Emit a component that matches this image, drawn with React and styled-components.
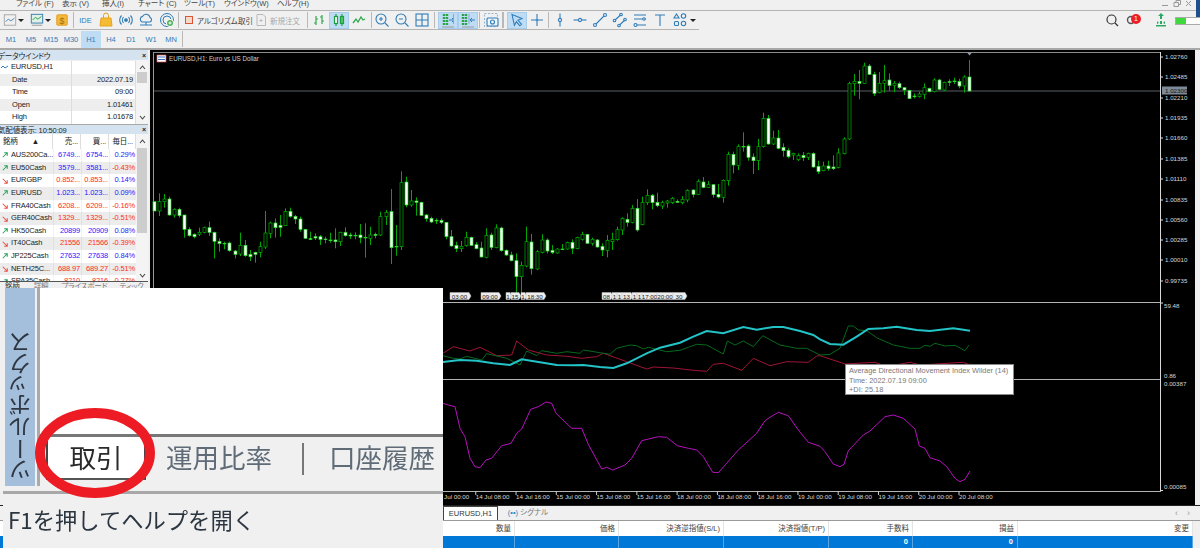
import React from 'react'
import styled, { createGlobalStyle } from 'styled-components'

const GlobalStyle = createGlobalStyle`
  html, body { margin: 0; padding: 0; background: #f0f0f0; }
  * { box-sizing: border-box; }
`

const UI_FONT = `"Liberation Sans", "Noto Sans CJK JP", sans-serif`
const BLUE = '#2f7db8'

const Frame = styled('div')`
  position: relative;
  width: 1200px;
  height: 548px;
  overflow: hidden;
  background: #f0f0f0;
  font-family: ${UI_FONT};
  font-feature-settings: "palt";
  color: #333;
`

/* top bars */
const MenuBar = styled('div')`
  display: flex;
  align-items: center;
  height: 11px;
  padding-bottom: 2px;
  border-bottom: 1px solid #b4b4b4;
  font-size: 7.5px;
  line-height: 8px;
  color: #444;
`
const MenuItem = styled('span')`
  flex: none;
  width: ${(p) => p.$w}px;
  white-space: nowrap;
`
const WindowControls = styled('div')`
  display: flex;
  margin-left: auto;
  margin-right: 8px;
  align-items: center;
`
const CornerBlue = styled('div')`
  position: absolute;
  right: 0;
  top: 0;
  width: 4px;
  height: 17px;
  background: #1f4e8c;
`
const Toolbar = styled('div')`
  display: flex;
  align-items: center;
  height: 19px;
  border-bottom: 1px solid #b4b4b4;
  width: 699px;
  padding-left: 2px;
`
const ToolBtn = styled('div')`
  flex: none;
  display: flex;
  align-items: center;
  justify-content: ${(p) => (p.$text ? 'flex-start' : 'center')};
  gap: ${(p) => p.$gap || 0}px;
  width: ${(p) => p.$w || 20}px;
  height: 17px;
  padding-left: ${(p) => p.$pl || 0}px;
  font-size: 7.5px;
  color: ${(p) => p.$color || '#444'};
  white-space: nowrap;
  background: ${(p) => (p.$active ? '#bfdcf5' : 'transparent')};
  border: 1px solid ${(p) => (p.$active ? '#a8cdec' : 'transparent')};
`
const Sep = styled('div')`
  flex: none;
  width: ${(p) => p.$w || 1}px;
  height: 16px;
  margin: 0 ${(p) => p.$r ?? 1}px 0 ${(p) => p.$l ?? 1}px;
  background: #b8b8b8;
`
const Caret = styled('span')`
  flex: none;
  width: 6px;
  height: 0;
  margin: 0 ${(p) => p.$r ?? 0}px 0 0;
  border-left: 3px solid transparent;
  border-right: 3px solid transparent;
  border-top: 3px solid #222;
`
const RightTools = styled('div')`
  position: absolute;
  top: 12px;
  left: 1104px;
  display: flex;
  align-items: center;
  gap: 6px;
`
const Badge = styled('span')`
  position: absolute;
  top: 2px;
  left: 5px;
  width: 10px;
  height: 10px;
  border-radius: 50%;
  background: #ee1c25;
  color: #fff;
  font-size: 7px;
  line-height: 10px;
  text-align: center;
`
const AlertWrap = styled('div')`
  position: relative;
  width: 18px;
  height: 16px;
  display: flex;
  align-items: center;
`
const Battery = styled('div')`
  width: 26px;
  height: 8px;
  margin: 2px 0 0 1px;
  border: 1px solid #aaa;
  background: #fff;
  &::before {
    content: '';
    display: block;
    width: 10px;
    height: 100%;
    background: #3fd83f;
  }
`
const TimeframeBar = styled('div')`
  display: flex;
  align-items: center;
  height: 20px;
  padding-left: 1px;
  border-bottom: 2px solid #a8a8a8;
`
const TfBtn = styled('div')`
  width: 20px;
  height: 17px;
  line-height: 17px;
  text-align: center;
  font-size: 7.5px;
  color: ${BLUE};
  background: ${(p) => (p.$active ? '#bfdcf5' : 'transparent')};
`

/* workspace */
const Workspace = styled('div')`
  display: flex;
  height: 455px;
`
const Sidebar = styled('div')`
  flex: none;
  width: 150px;
  display: flex;
  flex-direction: column;
  padding-right: 2px;
  font-size: 7.5px;
  letter-spacing: -0.15px;
  color: #222;
`
const PanelTitle = styled('div')`
  display: flex;
  justify-content: space-between;
  align-items: center;
  height: ${(p) => p.$h}px;
  padding-right: 2px;
  background: #d5e3f1;
  font-size: 7.5px;
  white-space: nowrap;
  overflow: hidden;
  border-top: ${(p) => (p.$line ? '1px solid #a8a8a8' : 'none')};
  & > span:first-child { margin-left: -2px; }
`
const CloseMark = styled('span')`
  font-size: 7px;
  font-weight: bold;
  color: #222;
`
const PanelBody = styled('div')`
  display: flex;
  height: ${(p) => p.$h}px;
  overflow: hidden;
`
const DataTable = styled('div')`
  flex: none;
  width: 136px;
  padding-top: 1px;
`
const DataRow = styled('div')`
  display: grid;
  grid-template-columns: 72px 64px;
  height: 12.6px;
  line-height: 12.6px;
  background: ${(p) => (p.$shade ? '#eeeeee' : '#fff')};
  & > span { border-right: 1px solid #ddd; white-space: nowrap; overflow: hidden; }
  & > span:first-child { padding-left: 12px; display: flex; align-items: center; gap: 2px; }
  & > span:first-child svg { margin-left: -11px; }
  & > span:last-child { text-align: right; padding-right: 2px; }
`
const Scroll = styled('div')`
  flex: 1;
  position: relative;
  background: #f4f4f4;
`
const ScrollThumb = styled('div')`
  position: absolute;
  left: 1px;
  right: 1px;
  top: ${(p) => p.$top}px;
  height: ${(p) => p.$h}px;
  background: #cdcdcd;
`
const ScrollChev = styled('svg')`
  position: absolute;
  left: 3px;
  top: ${(p) => p.$top}px;
`
const WatchGrid = styled('div')`
  flex: none;
  width: 136px;
  display: grid;
  grid-template-columns: 53px 28px 28px 27px;
  grid-template-rows: 15px;
  grid-auto-rows: 12.65px;
  line-height: 12.65px;
`
const WatchHead = styled('div')`
  grid-column: 1 / -1;
  display: grid;
  grid-template-columns: subgrid;
  line-height: 15px;
  background: #fff;
  & > span { padding: 0 2px; border-right: 1px solid #ddd; text-align: right; white-space: nowrap; }
  & > span:first-child { text-align: left; padding-left: 3px; word-spacing: 12px; }
`
const WatchRow = styled('div')`
  grid-column: 1 / -1;
  display: grid;
  grid-template-columns: subgrid;
  background: ${(p) => (p.$shade ? '#ececec' : '#fff')};
`
const SymbolCell = styled('span')`
  display: flex;
  align-items: center;
  gap: 3px;
  padding-left: 2px;
  white-space: nowrap;
  overflow: hidden;
  color: #222;
`
const ValueCell = styled('span')`
  text-align: right;
  padding-right: 1px;
  overflow: hidden;
  white-space: nowrap;
  color: ${(p) => (p.$down ? '#ff2a2a' : '#2323ff')};
  border-left: 1px solid ${(p) => (p.$shade ? '#e0e0e0' : '#f2f2f2')};
`
const WatchTabs = styled('div')`
  display: flex;
  height: 15px;
  border-top: 1px solid #555;
  font-size: 7.5px;
  line-height: 9px;
  color: #777;
  padding-left: 5px;
  background: #f0f0f0;
`
const WatchTab = styled('span')`
  margin-right: ${(p) => p.$gap}px;
  color: ${(p) => (p.$on ? '#333' : '#777')};
`

/* chart */
const ChartArea = styled('div')`
  flex: none;
  position: relative;
  width: 1045px;
  background: #000;
  display: flex;
  flex-direction: column;
`
const PaneSvg = styled('svg')`
  display: block;
  flex: none;
  font-family: "Liberation Sans", sans-serif;
  font-size: 6.2px;
`
const ChartTooltip = styled('div')`
  position: absolute;
  left: 695px;
  top: 314px;
  width: 169px;
  height: 31px;
  padding: 1px 3px;
  background: #fff;
  border: 1px solid #8a8a8a;
  color: #777;
  font-size: 7.4px;
  line-height: 9.5px;
  white-space: nowrap;
`

/* bottom panel */
const BottomPanel = styled('div')`
  height: 43px;
  border-top: 1px solid #222;
  font-size: 7.5px;
`
const TabStrip = styled('div')`
  display: flex;
  align-items: flex-end;
  height: 15px;
  padding-left: 443px;
  padding-right: 10px;
  background: #f0f0f0;
  border-bottom: 1px solid #999;
`
const ChartTab = styled('div')`
  width: ${(p) => p.$w}px;
  height: 14px;
  line-height: 13px;
  text-align: center;
  color: ${(p) => (p.$on ? '#333' : '#777')};
  background: ${(p) => (p.$on ? '#fff' : 'transparent')};
  border: ${(p) => (p.$on ? '1px solid #444' : 'none')};
  border-bottom: none;
`
const SignalGlyph = styled('span')`
  color: ${BLUE};
`
const TabArrows = styled('div')`
  display: flex;
  gap: 9px;
  margin-left: auto;
  align-self: center;
  color: #999;
  font-size: 9px;
`
const TradeTable = styled('div')`
  width: 1193px;
  display: grid;
  grid-template-columns: 515px 104px 105px 105px 84px 105px 175px;
`
const HeadCell = styled('div')`
  height: 15px;
  line-height: 15px;
  padding-right: 3px;
  text-align: right;
  background: #fff;
  color: #444;
  white-space: nowrap;
  border-right: 1px solid #e4e4e4;
`
const BlueCell = styled('div')`
  height: 13px;
  line-height: 12px;
  padding-right: 4px;
  text-align: right;
  background: #0078d7;
  color: #fff;
  font-weight: bold;
  border-right: 1px solid #5aa6e4;
`

/* pasted crop */
const ToolboxCrop = styled('div')`
  position: absolute;
  left: 3px;
  top: 288px;
  width: 440px;
  height: 260px;
  background: #fff;
  display: flex;
  flex-direction: column;
  font-family: "Noto Sans CJK JP", "Liberation Sans", sans-serif;
  font-feature-settings: normal;
  overflow: hidden;
`
const CropMain = styled('div')`
  display: flex;
  height: 206px;
  border-bottom: 3px solid #a8a8a8;
  background: #f0f0f0;
`
const VerticalBar = styled('div')`
  flex: none;
  width: 30px;
  margin-left: 2px;
  height: 198px;
  background: #a3bfdc;
  display: flex;
  align-items: flex-end;
  justify-content: center;
  padding-bottom: 6px;
  color: #2f3742;
  font-size: 23px;
  line-height: 30px;
  white-space: nowrap;
  & > span {
    writing-mode: vertical-rl;
    transform: rotate(180deg);
    font-feature-settings: "vpal";
    filter: blur(0.4px);
  }
`
const CropDivider = styled('div')`
  flex: none;
  width: 3px;
  height: 198px;
  margin-left: 2px;
  background: #aaa;
`
const CropContent = styled('div')`
  flex: 1;
  display: flex;
  flex-direction: column;
`
const CropBlank = styled('div')`
  flex: none;
  height: 149px;
  border-bottom: 3px solid #777;
  background: #fff;
`
const CropTabs = styled('div')`
  flex: 1;
  display: flex;
  align-items: flex-start;
  background: #f0f0f0;
  font-size: 26.5px;
  line-height: 40px;
  color: #5f6b77;
`
const CropTab = styled('div')`
  flex: none;
  width: ${(p) => p.$w}px;
  margin-left: ${(p) => p.$ml || 0}px;
  height: ${(p) => (p.$on ? 43 : 40)}px;
  text-align: center;
  color: ${(p) => (p.$on ? '#2a2a2a' : '#5f6b77')};
  background: ${(p) => (p.$on ? '#fff' : 'transparent')};
  border-left: ${(p) => (p.$on ? '2px solid #444' : 'none')};
  border-right: ${(p) => (p.$on ? '2px solid #444' : 'none')};
  border-bottom: ${(p) => (p.$on ? '2px solid #555' : 'none')};
  & > span { filter: blur(0.4px); display: inline-block; }
`
const CropTabSep = styled('div')`
  flex: none;
  width: 2px;
  height: 32px;
  margin: 6px 24px 0 18px;
  background: #777;
`
const StatusText = styled('div')`
  flex: 1;
  background: #f0f0f0;
  padding-left: 5px;
  font-size: 22.3px;
  line-height: 50px;
  color: #2c3640;
  & > span { filter: blur(0.4px); display: inline-block; }
`
const RedRing = styled('svg')`
  position: absolute;
  left: 31px;
  top: 119px;
`

/* small helpers */
const I = ({ children, w = 16, h = 16, vb = '0 0 16 16' }) => (
  <svg width={w} height={h} viewBox={vb} fill="none" stroke={BLUE} strokeWidth="1.1">
    {children}
  </svg>
)

const Icon = ({ name }) => {
  switch (name) {
    case 'line':
      return <I><rect x="1.5" y="2" width="13" height="12" stroke="#aaa" /><path d="M3 10l3-3 3 2 4-3" stroke="#4a87b8" /></I>
    case 'chartbox':
      return <I><rect x="1.5" y="1.5" width="13" height="10" fill="#dff0e6" stroke="#3a7fb0" /><path d="M3 8l3-3 3 2 4-3" stroke="#2ca24c" /><path d="M2 14h12" stroke="#999" /></I>
    case 'dollar':
      return <svg width="16" height="16" viewBox="0 0 16 16"><rect x="2" y="2" width="12" height="12" rx="1" fill="#f4b73a" stroke="#e19c1b" /><text x="8" y="12" textAnchor="middle" fontSize="10" fill="#a86a00" fontFamily="Liberation Sans">$</text></svg>
    case 'bag':
      return <svg width="16" height="16" viewBox="0 0 16 16"><path d="M3 6h10l1 8H2z" fill="#f5bb34" stroke="#e6a21f" /><path d="M5.5 6V3.5a2.5 2.5 0 0 1 5 0V6" stroke="#e6a21f" fill="none" /></svg>
    case 'signal':
      return <I><circle cx="8" cy="8" r="1.3" fill={BLUE} /><path d="M5.5 5.2a4 4 0 0 0 0 5.6M10.5 5.2a4 4 0 0 1 0 5.6M3.5 3.5a6.5 6.5 0 0 0 0 9M12.5 3.5a6.5 6.5 0 0 1 0 9" /></I>
    case 'cloud':
      return <I><path d="M4 10a3 3 0 0 1 .5-5.6A4 4 0 0 1 12 5.5a2.4 2.4 0 0 1 0 4.5z" /><path d="M2 13h12M8 10v3" /></I>
    case 'radar':
      return <svg width="16" height="16" viewBox="0 0 16 16" fill="none" stroke={BLUE}><circle cx="8" cy="8" r="6.5" /><circle cx="8" cy="8" r="4" /><circle cx="11" cy="11" r="3.6" fill="#4cae5b" stroke="#fff" /><path d="M9.4 11h3.2M11 9.4v3.2" stroke="#fff" /></svg>
    case 'algo':
      return <svg width="12" height="12" viewBox="0 0 12 12"><rect x="2.5" y="2.5" width="7" height="7" fill="#f6d9c8" stroke="#d9553a" /></svg>
    case 'order':
      return <svg width="12" height="14" viewBox="0 0 12 14" fill="none" stroke="#b9b9b9"><path d="M2 1.5h6l2.500 2.500v8.500H2zM4.500 7.500h3M6 6v3" /></svg>
    case 'bars':
      return <svg width="16" height="16" viewBox="0 0 16 16" fill="none" stroke="#2eaa4f" strokeWidth="1.2"><path d="M5 4v9M3 11h2M5 7h2M11 3v9M9 5h2M11 9h2" /></svg>
    case 'candles':
      return <svg width="16" height="16" viewBox="0 0 16 16" fill="none" stroke="#18a041" strokeWidth="1.2"><path d="M5 2v12M11 2v12" /><rect x="3.5" y="4.5" width="3" height="7" fill="#fff" /><rect x="9.5" y="4.5" width="3" height="7" fill="#53c76c" /></svg>
    case 'lineGreen':
      return <svg width="16" height="16" viewBox="0 0 16 16" fill="none" stroke="#2eaa4f" strokeWidth="1.3"><path d="M2 11l3-4 2 3 3-5 2 3 2-1" /></svg>
    case 'zoomIn':
      return <I><circle cx="7" cy="7" r="5" /><path d="M11 11l3.5 3.5M5 7h4M7 5v4" /></I>
    case 'zoomOut':
      return <I><circle cx="7" cy="7" r="5" /><path d="M11 11l3.5 3.5M5 7h4" /></I>
    case 'grid':
      return <I><rect x="2" y="2" width="12" height="12" /><path d="M8 2v12M2 8h12" /></I>
    case 'shiftR':
      return <svg width="16" height="16" viewBox="0 0 16 16" fill="none"><path d="M4 2v12M7 2v12" stroke="#29a346" strokeWidth="2.4" strokeDasharray="2 1" /><path d="M9 8h5M12 6l2 2-2 2" stroke={BLUE} /><path d="M13.5 2v10" stroke="#7fa9c9" /><path d="M2 15h12" stroke="#9a9a9a" /></svg>
    case 'shiftL':
      return <svg width="16" height="16" viewBox="0 0 16 16" fill="none"><path d="M3 2v12M6 2v12" stroke="#29a346" strokeWidth="2.4" strokeDasharray="2 1" /><path d="M9 2v10" stroke="#7fa9c9" /><path d="M15 8h-5M12 6l-2 2 2 2" stroke={BLUE} /><path d="M2 15h12" stroke="#9a9a9a" /></svg>
    case 'camera':
      return <I><rect x="1.5" y="1.5" width="13" height="13" stroke="#9ab8d0" strokeDasharray="2 1.5" /><rect x="4" y="6" width="11" height="8" rx="1" fill="#eef5fb" /><circle cx="9.5" cy="10" r="2" /></I>
    case 'pointer':
      return <I><path d="M3 2.5l10 4-4 1.800 3.500 4-1.600 1.500-3.500-4-2 3.500z" /></I>
    case 'cross':
      return <I><path d="M8 2v4.500M8 9.500V14M2 8h4.500M9.500 8H14" /><circle cx="8" cy="8" r="1" /></I>
    case 'vline':
      return <I><path d="M8 1.500v13" /><circle cx="8" cy="8" r="1.600" fill="#eef" /></I>
    case 'hline':
      return <I><path d="M1.500 8h13" /><circle cx="8" cy="8" r="1.600" fill="#eef" /></I>
    case 'trend':
      return <I><path d="M3 13L13 3" /><circle cx="3" cy="13" r="1.500" fill="#eef" /><circle cx="13" cy="3" r="1.500" fill="#eef" /></I>
    case 'channel':
      return <I><path d="M2.500 8.500L9 2.500M7 13.500l6.500-6" /><circle cx="2.500" cy="8.500" r="1.300" fill="#eef" /><circle cx="9" cy="2.500" r="1.300" fill="#eef" /><circle cx="7" cy="13.500" r="1.300" fill="#eef" /><circle cx="13" cy="7.500" r="1.300" fill="#eef" /></I>
    case 'fib':
      return <I><path d="M2 3h12M2 7h12M5 13h9" /><circle cx="12" cy="7" r="1.200" fill="#eef" /><circle cx="3.500" cy="13" r="1.500" fill="#eef" /></I>
    case 'text':
      return <I><path d="M3 3h10M8 3v11" /></I>
    case 'shapes':
      return <I><path d="M4.500 2l2.500 4H2z" /><circle cx="11.500" cy="4" r="2.200" /><rect x="2.500" y="9.500" width="4" height="4" rx="1" /><circle cx="11.500" cy="11.500" r="2.200" /></I>
    default:
      return null
  }
}

const TrendArrow = ({ up }) => (
  <svg width="6" height="6" viewBox="0 0 8 8" fill="none" stroke={up ? '#23a455' : '#e8504a'} strokeWidth="1.400" style={{ flex: 'none' }}>
    {up ? <path d="M1 7l6-6M3 1h4v4" /> : <path d="M1 1l6 6M3 7h4V3" />}
  </svg>
)

const Chevron = ({ top, up }) => (
  <ScrollChev $top={top} width="7" height="5" viewBox="0 0 7 5" fill="none" stroke="#444" strokeWidth="1.100">
    <path d={up ? 'M1 4l2.500-3L6 4' : 'M1 1l2.500 3L6 1'} />
  </ScrollChev>
)

const menuItems = [
  ['ファイル (F)', 46], ['表示 (V)', 40], ['挿入(I)', 36], ['チャート (C)', 46],
  ['ツール(T)', 40], ['ウインドウ(W)', 53], ['ヘルプ(H)', 40],
]

const timeframes = ['M1', 'M5', 'M15', 'M30', 'H1', 'H4', 'D1', 'W1', 'MN']

const dataRows = [
  ['Date', '2022.07.19', true],
  ['Time', '09:00', false],
  ['Open', '1.01461', true],
  ['High', '1.01678', false],
]

const watchRows = [
  ['AUS200Ca...', '6749...', '6754...', '0.29%', true, false],
  ['EU50Cash', '3579...', '3581...', '-0.43%', true, false],
  ['EURGBP', '0.852...', '0.853...', '0.14%', false, true],
  ['EURUSD', '1.023...', '1.023...', '0.09%', true, false],
  ['FRA40Cash', '6208...', '6209...', '-0.16%', false, true],
  ['GER40Cash', '1329...', '1329...', '-0.51%', false, true],
  ['HK50Cash', '20899', '20909', '0.08%', true, false],
  ['IT40Cash', '21556', '21566', '-0.39%', false, true],
  ['JP225Cash', '27632', '27638', '0.84%', true, false],
  ['NETH25C...', '688.97', '689.27', '-0.51%', false, true],
  ['SPA35Cash', '8210', '8216', '-0.27%', true, true],
]

/* candles: [high, body top, body bottom, low, bear], y read at 3x from y=50 */
const candles = [
  [455,455,483,483,1],[430,455,483,498,0],[432,447,455,473,0],[440,447,495,497,1],[475,478,495,503,0],[473,478,497,503,1],[495,495,538,563,1],[532,538,557,560,1],
  [550,553,560,565,1],[533,547,553,558,0],[530,533,547,550,0],[515,533,547,558,1],[545,547,574,625,1],[565,574,581,605,1],[575,580,581,598,1],[575,579,602,605,1],
  [600,603,613,625,1],[548,586,612,618,0],[570,586,617,620,1],[600,613,620,633,1],[605,607,613,638,1],[575,590,607,622,0],[483,549,591,597,0],[515,519,550,565,0],
  [505,519,533,563,1],[495,526,532,560,1],[475,484,527,528,0],[473,484,499,503,1],[495,499,507,522,1],[500,507,538,545,1],[537,538,565,567,1],[545,566,568,570,1],
  [550,560,564,570,1],[555,560,568,585,1],[560,567,568,580,1],[548,570,572,578,1],[535,570,575,595,1],[545,547,575,588,0],[532,547,557,560,1],[548,555,558,567,1],
  [547,556,557,568,1],[522,555,563,580,1],[520,562,563,623,1],[530,555,565,585,0],[548,553,556,565,1],[485,500,555,558,0],[480,487,500,525,0],[417,485,593,642,1],
  [525,589,590,617,1],[364,398,590,600,0],[380,396,465,472,1],[420,453,465,470,0],[442,453,457,497,1],[455,457,496,498,1],[492,495,506,515,1],[500,505,516,519,1],
  [505,511,513,522,1],[505,511,517,522,1],[516,517,560,568,1],[540,560,588,590,1],[575,586,596,606,1],[573,589,596,606,0],[545,562,587,590,0],[560,562,586,588,1],
  [576,584,596,598,1],[575,594,621,622,1],[535,556,622,625,0],[548,555,592,600,1],[523,534,593,595,0],[530,534,602,605,1],[598,601,615,618,1],[605,615,632,634,1],
  [610,632,680,740,1],[635,646,680,740,0],[530,575,648,652,0],[552,576,656,674,1],[600,605,657,660,0],[553,570,607,610,0],[565,570,603,610,1],
  [585,601,607,612,1],[595,597,609,611,0],[582,597,599,600,1],[575,577,597,599,0],[568,577,595,612,1],[560,562,596,598,0],[545,553,568,572,0],[552,553,580,581,1],
  [563,568,580,587,0],[567,570,591,593,1],[580,589,600,618,1],[555,571,601,622,0],[548,568,575,600,0],[530,539,569,572,0],[502,505,540,555,0],[490,508,517,530,1],
  [465,475,517,520,0],[447,475,540,545,1],[440,458,524,526,0],[418,436,458,465,0],[432,436,458,478,1],[428,457,467,472,1],[452,458,468,477,0],[450,453,459,473,0],
  [441,445,458,462,0],[448,454,457,459,1],[438,448,458,463,0],[418,421,450,457,0],[418,420,433,442,1],[388,394,433,435,0],[381,396,412,415,1],[393,404,412,414,0],
  [403,404,434,443,1],[402,433,441,445,1],[388,391,442,458,0],[305,313,392,407,0],[305,313,345,370,1],[283,290,346,360,0],[247,289,291,305,1],[283,288,322,332,1],
  [310,321,332,372,1],[267,290,332,360,0],[188,205,290,293,0],[195,205,282,284,1],[242,264,282,285,0],[240,264,295,298,1],[280,292,302,320,1],[295,301,320,325,1],
  [308,310,315,330,0],[310,316,329,333,0],[306,316,323,333,1],[308,310,322,330,0],[307,311,351,353,1],[332,349,365,372,1],[335,348,362,364,0],[332,348,356,362,1],
  [316,351,356,360,1],[295,309,352,355,0],[262,267,311,313,0],[95,100,267,270,0],[72,94,101,137,0],[60,94,100,148,1],[38,48,100,102,0],[42,48,73,75,1],
  [65,73,130,138,1],[66,100,128,130,0],[45,92,100,128,0],[70,90,106,122,1],[93,100,106,127,0],[95,101,113,117,1],[112,113,120,135,1],[119,121,146,147,1],
  [130,138,140,145,1],[125,132,140,143,0],[100,113,133,148,0],[113,115,125,127,1],[85,90,125,127,0],[87,90,118,120,1],[95,97,120,123,0],
  [88,95,97,108,1],[83,93,95,102,1],[86,94,108,115,1],[76,81,108,128,0],[30,81,123,124,1],
]

const separators = [
  [450, 469, '03:00'], [481, 499, '09:00'], [506, 510, '1'], [511, 519, '15'], [521, 525, '1'], [526, 544, '18:30'],
  [602, 611, '08'], [612, 617, '1'], [617, 622, '1'], [622, 631, '13'], [632, 637, '1'], [637, 642, '1'], [642, 657, '17:00'], [657, 673, '20:00'], [673, 685, '30'],
]

const priceLabels = [
  [57, '1.02760'], [77, '1.02485'], [98, '1.02210'], [118, '1.01935'], [138, '1.01660'], [159, '1.01385'],
  [179, '1.01110'], [200, '1.00835'], [220, '1.00560'], [240, '1.00285'], [260, '1.00010'], [281, '0.99735'],
]

const dates = ['14 Jul 00:00', '14 Jul 08:00', '14 Jul 16:00', '15 Jul 00:00', '15 Jul 08:00', '15 Jul 16:00', '18 Jul 00:00', '18 Jul 08:00', '18 Jul 16:00', '19 Jul 00:00', '19 Jul 08:00', '19 Jul 16:00', '20 Jul 00:00', '20 Jul 08:00']

// indicator lines, read off two 3x crops
const toPts = (a, b = []) =>
  [
    ...a.map(([x, y]) => [440 + x / 3, 285 + y / 3]),
    ...b.map(([x, y]) => [820 + x / 3, 285 + y / 3]),
  ]
    .map((p) => p.map((v) => v.toFixed(1)).join(','))
    .join(' ')

const cyanLine = toPts(
  [[9,231],[60,225],[110,227],[160,235],[210,240],[245,223],[300,232],[350,240],[400,241],[430,240],[480,246],[520,249],[560,235],[620,205],[660,188],[720,173],[760,155],[800,138],[850,145],[910,126],[950,134],[1000,126],[1030,126],[1080,138],[1120,150]],
  [[0,163],[30,177],[70,179],[110,155],[145,132],[190,130],[230,125],[290,135],[330,138],[400,130],[450,137]]
)
const redLine = toPts(
  [[9,205],[40,185],[90,198],[120,187],[170,212],[215,210],[230,168],[265,195],[320,210],[380,214],[425,220],[470,215],[490,205],[560,230],[620,252],[640,246],[700,249],[760,256],[800,259],[820,238],[850,235],[905,256],[940,220],[990,242],[1040,230],[1105,232],[1130,213]],
  [[0,212],[30,222],[75,237],[165,232],[200,245],[270,232],[300,240],[430,232],[450,240]]
)
const greenLine = toPts(
  [[9,212],[40,220],[60,222],[80,214],[125,225],[140,206],[200,220],[240,240],[260,198],[290,212],[305,197],[350,205],[380,200],[420,205],[430,195],[510,208],[530,190],[570,180],[590,182],[610,192],[625,187],[680,200],[720,196],[745,187],[770,178],[800,180],[850,207],[862,168],[885,180],[910,168],[940,185],[968,152],[1020,180],[1070,190],[1100,190]],
  [[0,210],[30,208],[60,190],[85,123],[100,123],[115,135],[140,137],[170,158],[220,180],[270,190],[300,190],[315,181],[330,184],[345,175],[375,183],[405,181],[435,197],[447,180]]
)
const purpleLine = toPts(
  [[9,355],[25,360],[45,365],[60,430],[75,455],[90,520],[105,545],[120,548],[138,525],[155,520],[185,482],[213,475],[230,445],[245,432],[272,373],[295,365],[318,351],[335,355],[348,385],[395,430],[425,430],[445,478],[485,552],[500,547],[518,555],[555,540],[575,520],[605,467],[625,462],[655,455],[680,457],[712,482],[745,490],[770,495],[790,515],[818,562],[835,563],[860,535],[895,495],[950,445],[975,407],[990,397],[1015,382],[1045,392],[1075,435],[1105,472]],
  [[0,484],[15,500],[40,537],[60,545],[72,538],[85,497],[130,450],[150,438],[195,395],[220,390],[250,400],[285,432],[298,483],[315,490],[330,518],[360,528],[380,545],[405,580],[420,590],[435,583],[450,558]]
)

const Candle = ({ c, i }) => {
  const [hi, top, bot, lo, bear] = c
  const x = Math.round(154 + i * 5.033) + 0.5
  const y = (v) => 50 + v / 3
  return (
    <>
      <line x1={x} x2={x} y1={y(hi)} y2={y(lo)} stroke="#00a800" />
      <rect
        x={x - 1.5}
        width="3"
        y={y(top)}
        height={Math.max(0.6, (bot - top) / 3)}
        fill={bear ? '#fff' : '#000'}
        stroke={bear ? '#22d822' : '#00b000'}
        strokeWidth="0.7"
      />
    </>
  )
}

const AxisTick = ({ y, label }) => (
  <>
    <line x1="1160" x2="1163" y1={y} y2={y} stroke="#ddd" />
    <text x="1165" y={y + 2.2} fill="#d8d8d8">{label}</text>
  </>
)

const Pane = ({ top, h, children }) => (
  <PaneSvg width="1045" height={h} viewBox={`150 ${top} 1045 ${h}`}>
    {children}
  </PaneSvg>
)

const MainChart = () => (
  <Pane top={50} h={252}>
    <line x1="153" x2="1161" y1="52.500" y2="52.500" stroke="#8a8a8a" />
    <line x1="153.500" x2="153.500" y1="52" y2="302" stroke="#9a9a9a" />
    <line x1="1160.500" x2="1160.500" y1="52" y2="302" stroke="#d8d8d8" />
    <line x1="154" x2="1160" y1="91" y2="91" stroke="#5a6066" />
    <rect x="157" y="55" width="9" height="7" fill="#fff" stroke="#c8534e" strokeWidth="0.700" />
    <path d="M158 57h7M158 59.500h7" stroke="#3e6fc4" strokeWidth="1" />
    <text x="169" y="61" fill="#d0d0d0" fontSize="6.300">EURUSD,H1:  Euro vs US Dollar</text>
    {candles.map((c, i) => (
      <Candle key={i} c={c} i={i} />
    ))}
    <path d="M967 52.500h5l-2.500 3z" fill="#8f9aa6" />
    {priceLabels.map(([y, label]) => (
      <AxisTick key={label} y={y} label={label} />
    ))}
    <rect x="1162" y="86.500" width="25" height="8" fill="#7d8a97" />
    <text x="1165" y="92.800" fill="#111">1.02300</text>
    {separators.map(([x0, x1, label]) => (
      <g key={x0}>
        <path d={`M${x0} 292.500H${x1}l2 3.500-2 3.500H${x0}z`} fill="#ededed" stroke="#bbb" strokeWidth="0.500" />
        <text x={(x0 + x1) / 2} y="298.500" fill="#222" textAnchor="middle">{label}</text>
      </g>
    ))}
  </Pane>
)

const AdxChart = () => (
  <Pane top={302} h={77}>
    <line x1="153" x2="1161" y1="302.500" y2="302.500" stroke="#b4b4b4" />
    <line x1="1160.500" x2="1160.500" y1="302" y2="379" stroke="#d8d8d8" />
    <line x1="1160" x2="1163" y1="303" y2="303" stroke="#ddd" />
    <text x="1164" y="308" fill="#d8d8d8">59.48</text>
    <text x="1164" y="377.500" fill="#d8d8d8">0.86</text>
    <polyline points={redLine} fill="none" stroke="#a01436" />
    <polyline points={greenLine} fill="none" stroke="#056a1c" />
    <polyline points={cyanLine} fill="none" stroke="#22c4c8" strokeWidth="2" />
  </Pane>
)

const OscChart = () => (
  <Pane top={379} h={112}>
    <line x1="153" x2="1161" y1="379.500" y2="379.500" stroke="#b4b4b4" />
    <line x1="1160.500" x2="1160.500" y1="379" y2="491" stroke="#d8d8d8" />
    <text x="1164" y="385.500" fill="#d8d8d8">0.00387</text>
    <text x="1164" y="489" fill="#d8d8d8">0.00085</text>
    <line x1="1160" x2="1163" y1="490.500" y2="490.500" stroke="#ddd" />
    <polyline points={purpleLine} fill="none" stroke="#b810c0" />
  </Pane>
)

const TimeAxis = () => (
  <Pane top={491} h={14}>
    <line x1="153" x2="1161" y1="491.500" y2="491.500" stroke="#b4b4b4" />
    {dates.map((d, i) => (
      <g key={d}>
        <line x1={435.500 + i * 40.270} x2={435.500 + i * 40.270} y1="491" y2="495" stroke="#ccc" />
        <text x={435.500 + i * 40.270} y="499" fill="#d8d8d8">{d}</text>
      </g>
    ))}
  </Pane>
)

export default function App() {
  return (
    <Frame>
      <GlobalStyle />
      <MenuBar>
        <MenuItem $w={16} />
        {menuItems.map(([label, w]) => (
          <MenuItem key={label} $w={w}>{label}</MenuItem>
        ))}
        <WindowControls>
          <svg width="30" height="8" viewBox="0 0 30 8" fill="none" stroke="#999">
            <path d="M0 5.500h6M12 2.500h4.500v4H12zM14 2.500V.500h4.500v4H17M24 1l5 5M29 1l-5 5" />
          </svg>
        </WindowControls>
      </MenuBar>
      <CornerBlue />

      <Toolbar>
        <ToolBtn $w={16}><Icon name="line" /></ToolBtn>
        <Caret $r={5} />
        <ToolBtn $w={16}><Icon name="chartbox" /></ToolBtn>
        <Caret $r={3} />
        <ToolBtn $w={16}><Icon name="dollar" /></ToolBtn>
        <Sep $l={3} $r={1} />
        <ToolBtn $w={21} $color={BLUE}>IDE</ToolBtn>
        <ToolBtn><Icon name="bag" /></ToolBtn>
        <ToolBtn><Icon name="signal" /></ToolBtn>
        <ToolBtn><Icon name="cloud" /></ToolBtn>
        <ToolBtn $w={21}><Icon name="radar" /></ToolBtn>
        <Sep $l={1} $r={1} />
        <ToolBtn $text $w={74} $pl={2} $gap={2}><Icon name="algo" />アルゴリズム取引</ToolBtn>
        <ToolBtn $text $w={51} $pl={0} $gap={3} $color="#a8a8a8"><Icon name="order" />新規注文</ToolBtn>
        <Sep $l={2} $r={1} />
        <ToolBtn><Icon name="bars" /></ToolBtn>
        <ToolBtn $active><Icon name="candles" /></ToolBtn>
        <ToolBtn><Icon name="lineGreen" /></ToolBtn>
        <Sep $l={2} $r={0} />
        <ToolBtn><Icon name="zoomIn" /></ToolBtn>
        <ToolBtn><Icon name="zoomOut" /></ToolBtn>
        <ToolBtn><Icon name="grid" /></ToolBtn>
        <Sep $l={2} $r={3} />
        <ToolBtn $active><Icon name="shiftR" /></ToolBtn>
        <ToolBtn $active><Icon name="shiftL" /></ToolBtn>
        <Sep $l={1} $r={1} />
        <ToolBtn><Icon name="camera" /></ToolBtn>
        <Sep $l={1} $r={3} $w={2} />
        <ToolBtn $active><Icon name="pointer" /></ToolBtn>
        <ToolBtn><Icon name="cross" /></ToolBtn>
        <Sep $l={1} $r={1} />
        <ToolBtn><Icon name="vline" /></ToolBtn>
        <ToolBtn><Icon name="hline" /></ToolBtn>
        <ToolBtn><Icon name="trend" /></ToolBtn>
        <ToolBtn><Icon name="channel" /></ToolBtn>
        <ToolBtn><Icon name="fib" /></ToolBtn>
        <ToolBtn><Icon name="text" /></ToolBtn>
        <ToolBtn><Icon name="shapes" /></ToolBtn>
        <Caret />
      </Toolbar>
      <RightTools>
        <svg width="16" height="16" viewBox="0 0 16 16" fill="none" stroke="#333" strokeWidth="1.200">
          <circle cx="7.500" cy="7.500" r="4.500" /><path d="M11 11l3 3" />
        </svg>
        <AlertWrap>
          <svg width="10" height="10" viewBox="0 0 10 10" fill="none" stroke="#555" strokeWidth="1.400"><circle cx="5" cy="5" r="3.500" /></svg>
          <Badge>1</Badge>
        </AlertWrap>
        <svg width="14" height="16" viewBox="0 0 14 16" fill="#2ca865" style={{ marginLeft: 4 }}>
          <path d="M7 1l3 3H8v3H6V4H4zM3 9l2 2-2 1zM11 9l-2 2 2 1zM2 13h10v1.500H2zM6 9h2v3H6z" />
        </svg>
        <Battery />
      </RightTools>

      <TimeframeBar>
        {timeframes.map((t) => (
          <TfBtn key={t} $active={t === 'H1'}>{t}</TfBtn>
        ))}
        <Sep $l={1} $r={0} />
      </TimeframeBar>

      <Workspace>
        <Sidebar>
          <PanelTitle $h={10}>
            <span>データウインドウ</span>
            <CloseMark>×</CloseMark>
          </PanelTitle>
          <PanelBody $h={64}>
            <DataTable>
              <DataRow>
                <span>
                  <svg width="8" height="6" viewBox="0 0 8 6" fill="none" stroke={BLUE}><path d="M0 4l2-2 2 2 3-2" /></svg>
                  EURUSD,H1
                </span>
                <span />
              </DataRow>
              {dataRows.map(([k, v, shade]) => (
                <DataRow key={k} $shade={shade}>
                  <span>{k}</span>
                  <span>{v}</span>
                </DataRow>
              ))}
            </DataTable>
            <Scroll>
              <Chevron top={5} up />
              <ScrollThumb $top={12} $h={11} />
              <Chevron top={55} />
            </Scroll>
          </PanelBody>
          <PanelTitle $h={10} $line>
            <span>気配値表示: 10:50:09</span>
            <CloseMark>×</CloseMark>
          </PanelTitle>
          <PanelBody $h={147}>
            <WatchGrid>
              <WatchHead>
                <span>銘柄 ▲</span>
                <span>売...</span>
                <span>買...</span>
                <span>毎日...</span>
              </WatchHead>
              {watchRows.map(([sym, bid, ask, pct, up, down], i) => {
                const shade = i % 2 === 1
                return (
                  <WatchRow key={sym} $shade={shade}>
                    <SymbolCell><TrendArrow up={up} />{sym}</SymbolCell>
                    <ValueCell $down={down} $shade={shade}>{bid}</ValueCell>
                    <ValueCell $down={down} $shade={shade}>{ask}</ValueCell>
                    <ValueCell $down={pct.startsWith('-')} $shade={shade}>{pct}</ValueCell>
                  </WatchRow>
                )
              })}
            </WatchGrid>
            <Scroll>
              <Chevron top={5} up />
              <ScrollThumb $top={14} $h={85} />
              <Chevron top={139} />
            </Scroll>
          </PanelBody>
          <WatchTabs>
            <WatchTab $on $gap={14}>銘柄</WatchTab>
            <WatchTab $gap={13}>詳細</WatchTab>
            <WatchTab $gap={12}>プライスボード</WatchTab>
            <WatchTab $gap={0}>ティック</WatchTab>
          </WatchTabs>
        </Sidebar>

        <ChartArea>
          <MainChart />
          <AdxChart />
          <OscChart />
          <TimeAxis />
          <ChartTooltip>
            Average Directional Movement Index Wilder (14)<br />
            Time: 2022.07.19 09:00<br />
            +DI: 25.18
          </ChartTooltip>
        </ChartArea>
      </Workspace>

      <BottomPanel>
        <TabStrip>
          <ChartTab $on $w={55}>EURUSD,H1</ChartTab>
          <ChartTab $w={60}>
            <SignalGlyph>(••)</SignalGlyph> シグナル
          </ChartTab>
          <TabArrows><span>‹</span><span>›</span></TabArrows>
        </TabStrip>
        <TradeTable>
          <HeadCell>数量</HeadCell>
          <HeadCell>価格</HeadCell>
          <HeadCell>決済逆指値(S/L)</HeadCell>
          <HeadCell>決済指値(T/P)</HeadCell>
          <HeadCell>手数料</HeadCell>
          <HeadCell>損益</HeadCell>
          <HeadCell>変更</HeadCell>
          <BlueCell />
          <BlueCell />
          <BlueCell />
          <BlueCell />
          <BlueCell>0</BlueCell>
          <BlueCell>0</BlueCell>
          <BlueCell />
        </TradeTable>
      </BottomPanel>

      <ToolboxCrop>
        <CropMain>
          <VerticalBar><span>ツールボックス</span></VerticalBar>
          <CropDivider />
          <CropContent>
            <CropBlank />
            <CropTabs>
              <CropTab $on $w={100} $ml={6}><span>取引</span></CropTab>
              <CropTab $w={130} $ml={8}><span>運用比率</span></CropTab>
              <CropTabSep />
              <CropTab $w={108}><span>口座履歴</span></CropTab>
            </CropTabs>
          </CropContent>
        </CropMain>
        <StatusText><span>F1を押してヘルプを開く</span></StatusText>
        <RedRing width="124" height="96" viewBox="0 0 124 96">
          <ellipse cx="61" cy="46" rx="55" ry="40" fill="none" stroke="#ed1c24" strokeWidth="10" />
        </RedRing>
      </ToolboxCrop>
    </Frame>
  )
}
